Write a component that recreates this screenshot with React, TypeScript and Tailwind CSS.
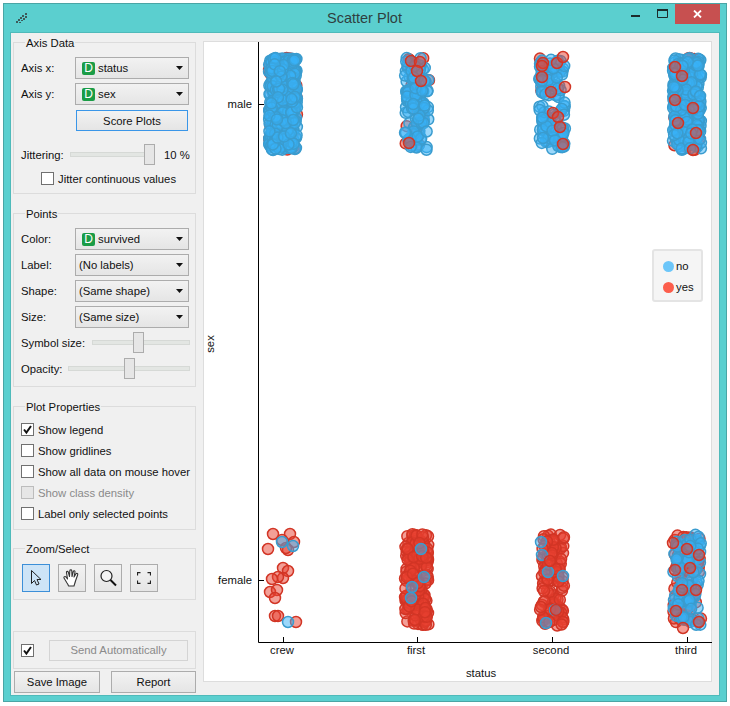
import React from "react";

function rng(seed: number) {
  let s = seed >>> 0;
  return () => {
    s = (s + 0x6d2b79f5) >>> 0;
    let t = s;
    t = Math.imul(t ^ (t >>> 15), t | 1);
    t ^= t + Math.imul(t ^ (t >>> 7), t | 61);
    return ((t ^ (t >>> 14)) >>> 0) / 4294967296;
  };
}

type Pt = [number, number, "b" | "r"];

function cluster(seed: number, cx: number, cy: number, nBlue: number, nRed: number, jx = 14): Pt[] {
  const r = rng(seed);
  const pts: Pt[] = [];
  for (let i = 0; i < nRed; i++) pts.push([cx + (r() * 2 - 1) * jx, cy + (r() * 2 - 1) * 46, "r"]);
  for (let i = 0; i < nBlue; i++) pts.push([cx + (r() * 2 - 1) * jx, cy + (r() * 2 - 1) * 46, "b"]);
  return pts;
}

const top = (kind: "b" | "r", list: number[][]): Pt[] => list.map((p) => [p[0], p[1], kind]);

const points: Pt[] = [
  ...cluster(11, 283, 104, 420, 90, 14),
  ...cluster(12, 417, 104, 105, 30, 12),
  ...top("r", [[411, 61], [420, 62], [417, 71], [421, 81], [409, 143]]),
  ...cluster(13, 552, 104, 130, 6, 13),
  ...top("r", [[543, 63], [542, 66], [557, 63], [563, 57], [542, 77], [551, 92], [565, 87], [553, 113], [558, 117], [560, 127], [563, 144]]),
  ...cluster(14, 687, 104, 300, 45, 14),
  ...top("r", [[675, 67], [682, 76], [675, 100], [693, 108], [678, 123], [696, 133], [693, 150]]),
  ...top("r", [[273, 534], [290, 534], [268, 549], [282, 540], [294, 542], [288, 550], [286, 548], [283, 568], [288, 571], [283, 578], [278, 577], [272, 579], [270, 592], [277, 590], [275, 598], [275, 616], [278, 616], [296, 622]]),
  ...top("b", [[282, 542], [293, 546], [288, 622]]),
  ...cluster(15, 417, 580, 0, 170, 12),
  ...top("b", [[421, 549], [424, 577], [412, 587], [411, 598]]),
  ...cluster(16, 552, 580, 0, 110, 12),
  ...top("b", [[541, 542], [542, 555], [548, 572], [563, 576], [546, 623], [555, 610]]),
  ...top("r", [[550, 561], [556, 610], [541, 607]]),
  ...cluster(17, 687, 580, 85, 80, 14),
  ...top("r", [[687, 549], [699, 555], [673, 543], [675, 570], [682, 590], [696, 590], [676, 611], [683, 628], [699, 622], [690, 568]]),
];

const Arrow = () => (
  <svg width="7" height="4" viewBox="0 0 7 4" className="ml-auto mr-[5px] shrink-0">
    <path d="M0 0H7L3.5 4Z" fill="#111" />
  </svg>
);

const Badge = () => (
  <span className="ml-[6px] mr-[3px] flex h-[13px] w-[13px] shrink-0 items-center justify-center rounded-[2px] bg-[#1a9c46] text-[12px] leading-none text-white">
    D
  </span>
);

function Combo({ text, badge }: { text: string; badge?: boolean }) {
  return (
    <div className="flex h-[22px] w-[114px] items-center border border-[#acacac] bg-gradient-to-b from-[#f2f2f2] to-[#e5e5e5]">
      {badge ? <Badge /> : <span className="w-[3px]" />}
      <span>{text}</span>
      <Arrow />
    </div>
  );
}

function Row({ label, text, badge }: { label: string; text: string; badge?: boolean }) {
  return (
    <div className="flex h-[22px] items-center">
      <span className="w-[54px]">{label}</span>
      <Combo text={text} badge={badge} />
    </div>
  );
}

function Slider({ width, at }: { width: number; at: number }) {
  return (
    <div className="relative h-[3px] bg-[#e3e6e3] outline outline-1 outline-[#d6d9d6]" style={{ width }}>
      <div
        className="absolute top-[-9px] h-[21px] w-[11px] border border-[#acacac] bg-[#e6e6e6]"
        style={{ left: at }}
      />
    </div>
  );
}

function Group({ title, height, children, titleX = 11 }: { title: string; height: number; children?: React.ReactNode; titleX?: number }) {
  return (
    <div className="relative w-[183px] shrink-0 border border-[#dcdcdc] pl-[7px]" style={{ height }}>
      <span className="absolute top-[-7px] bg-[#f0f0f0] px-[1px] leading-[14px]" style={{ left: titleX }}>
        {title}
      </span>
      {children}
    </div>
  );
}

function Check({ label, checked, disabled }: { label: string; checked?: boolean; disabled?: boolean }) {
  return (
    <div className={`flex h-[13px] items-center ${disabled ? "text-[#8a8a8a]" : ""}`}>
      <span
        className={`mr-[4px] flex h-[13px] w-[13px] shrink-0 items-center justify-center border ${
          disabled ? "border-[#bcbcbc] bg-[#e6e6e6]" : "border-[#707070] bg-white"
        }`}
      >
        {checked && (
          <svg width="11" height="11" viewBox="0 0 11 11">
            <path d="M2 5.5L4.4 8.5L9 2" fill="none" stroke="#111" strokeWidth="2" />
          </svg>
        )}
      </span>
      <span>{label}</span>
    </div>
  );
}

function Tool({ active, children }: { active?: boolean; children: React.ReactNode }) {
  return (
    <div
      className={`flex h-[28px] w-[28px] items-center justify-center border ${
        active ? "border-[#3c8fd8] bg-[#cde4f7]" : "border-[#acacac] bg-gradient-to-b from-[#f2f2f2] to-[#e5e5e5]"
      }`}
    >
      {children}
    </div>
  );
}

function Btn({ children, className }: { children: React.ReactNode; className: string }) {
  return (
    <div className={`flex h-[22px] items-center justify-center border bg-gradient-to-b from-[#f2f2f2] to-[#e5e5e5] ${className}`}>
      {children}
    </div>
  );
}

const xTicks: [number, string][] = [[283, "crew"], [417, "first"], [552, "second"], [687, "third"]];
const yTicks: [number, string][] = [[104, "male"], [580, "female"]];

function Plot() {
  return (
    <svg
      width="509"
      height="641"
      viewBox="203 41 509 641"
      className="block"
      fontFamily="'Liberation Sans', sans-serif"
      fontSize="11.3"
      fill="#111"
    >
      {points.map((p, i) =>
        p[2] === "b" ? (
          <circle key={i} cx={p[0]} cy={p[1]} r="5.5" fill="#38b2f7" fillOpacity="0.5" stroke="#3a9ccf" strokeWidth="1.5" />
        ) : (
          <circle key={i} cx={p[0]} cy={p[1]} r="5.5" fill="#e8402f" fillOpacity="0.5" stroke="#d23525" strokeWidth="1.5" />
        )
      )}
      <path d="M258.5 42V642.5H712" fill="none" stroke="#000" />
      {yTicks.map(([y, t]) => (
        <g key={t}>
          <path d={`M258 ${y + 0.5}H264`} stroke="#000" />
          <text x="252" y={y + 4} textAnchor="end">{t}</text>
        </g>
      ))}
      {xTicks.map(([x, t]) => (
        <g key={t}>
          <path d={`M${x + 0.5} 642V637`} stroke="#000" />
          <text x={x - 1} y="654" textAnchor="middle">{t}</text>
        </g>
      ))}
      <text x="481" y="677" textAnchor="middle">status</text>
      <text transform="translate(214 344) rotate(-90)" textAnchor="middle">sex</text>
    </svg>
  );
}

export default function App() {
  return (
    <div className="relative h-[706px] w-[730px] overflow-hidden bg-white pl-[3px] pt-[3px] font-['Liberation_Sans',sans-serif] text-[11.3px] leading-[14px] text-[#111]">
      <div className="flex h-[699px] w-[724px] flex-col border border-[#4aa5a5] bg-[#5bcfcf]">
        <div className="relative flex h-[29px] shrink-0 items-center justify-center pb-[1px] pr-[1px]">
          <svg width="12" height="11" viewBox="0 0 12 11" className="absolute left-[12px] top-[9px]" fill="#3d5a5a">
            <path d="M9 0h2v2H9zM6 2h2v2H6zM9 3h2v2H9zM4 4h2v2H4zM7 5h2v2H7zM2 6h2v2H2zM5 7h2v1H5zM0 8h2v2H0zM3 9h2v1H3z" />
          </svg>
          <span className="text-[14.5px] text-[#2f3f3f]">Scatter Plot</span>
          <div className="absolute right-[6px] top-0 flex h-[20px] items-center">
            <svg width="9" height="3" viewBox="0 0 9 3" className="mr-[17px] mt-[3px]"><rect width="9" height="2" y="1" fill="#1c2b2b" /></svg>
            <svg width="11" height="9" viewBox="0 0 11 9" className="mr-[7px] -mt-[1px]"><path d="M.5 1.5h10v7H.5z" fill="none" stroke="#1c2b2b" /><rect width="11" height="2" fill="#1c2b2b" /></svg>
            <div className="flex h-[20px] w-[45px] items-center justify-center bg-[#c75050]">
              <svg width="9" height="8" viewBox="0 0 9 8"><path d="M1 0.5L8 7.5M8 0.5L1 7.5" stroke="#fff" strokeWidth="1.8" /></svg>
            </div>
          </div>
        </div>

        <div className="mx-[7px] flex h-[662px] shrink-0 gap-[7px] bg-[#f0f0f0] pl-[2px] shadow-[0_0_0_1px_#4fbaba]">
          <div className="flex w-[183px] shrink-0 flex-col pt-[9px]">
            <Group title="Axis Data" height={152}>
              <div className="flex flex-col gap-[4px] pt-[14px]">
                <Row label="Axis x:" text="status" badge />
                <Row label="Axis y:" text="sex" badge />
              </div>
              <div className="ml-[55px] mt-[5px] flex h-[21px] w-[112px] items-center justify-center border border-[#3a96e8] bg-gradient-to-b from-[#f2f2f2] to-[#e5e5e5]">
                Score Plots
              </div>
              <div className="mt-[22px] flex h-[3px] items-center">
                <span className="w-[50px] shrink-0">Jittering:</span>
                <Slider width={83} at={73} />
                <span className="ml-[10px]">10 %</span>
              </div>
              <div className="ml-[20px] mt-[16px]">
                <Check label="Jitter continuous values" />
              </div>
            </Group>

            <div className="mt-[19px]">
              <Group title="Points" height={174}>
                <div className="flex flex-col gap-[4px] pt-[14px]">
                  <Row label="Color:" text="survived" badge />
                  <Row label="Label:" text="(No labels)" />
                  <Row label="Shape:" text="(Same shape)" />
                  <Row label="Size:" text="(Same size)" />
                </div>
                <div className="mt-[13px] flex h-[3px] items-center">
                  <span className="w-[72px] shrink-0">Symbol size:</span>
                  <Slider width={96} at={40} />
                </div>
                <div className="mt-[23px] flex h-[3px] items-center">
                  <span className="w-[48px] shrink-0">Opacity:</span>
                  <Slider width={120} at={55} />
                </div>
              </Group>
            </div>

            <div className="mt-[19px]">
              <Group title="Plot Properties" height={124}>
                <div className="flex flex-col gap-[8px] pt-[16px]">
                  <Check label="Show legend" checked />
                  <Check label="Show gridlines" />
                  <Check label="Show all data on mouse hover" />
                  <Check label="Show class density" disabled />
                  <Check label="Label only selected points" />
                </div>
              </Group>
            </div>

            <div className="mt-[18px]">
              <Group title="Zoom/Select" height={52}>
                <div className="flex gap-[8px] pl-[1px] pt-[15px]">
                  <Tool active>
                    <svg width="14" height="18" viewBox="0 0 14 18" fill="none" stroke="#222" strokeWidth="1">
                      <path d="M2.5 1.5V14.5L5.5 11.5L7.5 16L10 15L8 10.5H12Z" />
                    </svg>
                  </Tool>
                  <Tool>
                    <svg width="20" height="20" viewBox="0 0 20 20" fill="#fff" stroke="#333" strokeWidth="1.1" strokeLinejoin="round">
                      <path d="M5 15L2 10C1.5 9 3 8 4 9L5.5 11L4.5 4.5C4.3 3 6 3 6.4 4.3L7.5 8.5L7.8 2.8C7.9 1.5 9.7 1.5 9.8 2.8L10 8.5L11.3 3.5C11.7 2.2 13.3 2.7 13 4L12 9L14 5.8C14.7 4.8 16.2 5.6 15.7 6.8L13.5 13C13 15 12.5 16 12 18H6.5C6.3 17 5.8 16 5 15Z" />
                    </svg>
                  </Tool>
                  <Tool>
                    <svg width="20" height="20" viewBox="0 0 20 20" fill="none">
                      <circle cx="8.5" cy="8" r="5.5" stroke="#222" strokeWidth="1.2" fill="#f4f4f4" />
                      <path d="M12.5 12L18 17.5" stroke="#111" strokeWidth="2" />
                    </svg>
                  </Tool>
                  <Tool>
                    <svg width="14" height="12" viewBox="0 0 14 12" fill="none" stroke="#222" strokeWidth="1.2">
                      <path d="M0.5 3.5V.6H3.5M10.5 .6H13.5V3.5M13.5 8.5V11.4H10.5M3.5 11.4H.5V8.5" />
                    </svg>
                  </Tool>
                </div>
              </Group>
            </div>

            <div className="mt-[31px] flex h-[38px] w-[183px] shrink-0 items-center border border-[#dcdcdc] pl-[7px]">
              <Check label="" checked />
              <div className="ml-[11px] flex h-[21px] w-[139px] items-center justify-center border border-[#d4d4d4] bg-[#efefef] text-[#8a8a8a]">
                Send Automatically
              </div>
            </div>

            <div className="mt-[2px] flex w-[183px] justify-between pl-[1px]">
              <Btn className="w-[86px] border-[#acacac]">Save Image</Btn>
              <Btn className="w-[85px] border-[#acacac]">Report</Btn>
            </div>
          </div>

          <div className="relative mt-[8px] h-[641px] w-[509px] shrink-0 overflow-hidden bg-white shadow-[inset_0_0_0_1px_#dddddd]">
            <Plot />
            <div className="absolute left-[449px] top-[208px] h-[53px] w-[51px] rounded-[3px] border-2 border-[#e4e4e4] bg-[#f5f5f5]">
              <div className="flex items-center pl-[9px] pt-[8px]">
                <span className="mr-[2px] h-[11px] w-[11px] rounded-full bg-[#6cc6f9]" />
                no
              </div>
              <div className="flex items-center pl-[9px] pt-[7px]">
                <span className="mr-[2px] h-[11px] w-[11px] rounded-full bg-[#fc5e4c]" />
                yes
              </div>
            </div>
          </div>
        </div>
      </div>
    </div>
  );
}
